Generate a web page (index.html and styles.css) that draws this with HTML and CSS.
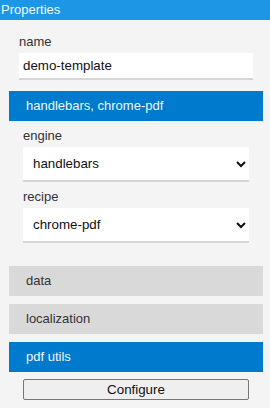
FILE: index.html
```html
<!DOCTYPE html>
<html lang="en">
<head>
  <meta charset="UTF-8" />
  <title>Properties</title>
  <link rel="stylesheet" href="styles.css">
</head>
<body>

  <div class="title">Properties</div>

  <div class="panel">
    <div class="field name-field">
      <label for="name">name</label>
      <input type="text" id="name" value="demo-template" />
    </div>

    <div class="section open">handlebars, chrome-pdf</div>
    <div class="section-body">
      <div class="field">
        <label for="engine">engine</label>
        <select id="engine">
          <option>handlebars</option>
          <option>jsrender</option>
          <option>none</option>
        </select>
      </div>
      <div class="field">
        <label for="recipe">recipe</label>
        <select id="recipe">
          <option>chrome-pdf</option>
          <option>html</option>
          <option>xlsx</option>
        </select>
      </div>
    </div>

    <div class="section">data</div>
    <div class="section">localization</div>
    <div class="section open">pdf utils</div>
    <div class="section-body tools">
      <button id="configureBtn">Configure</button>
    </div>
  </div>

</body>
</html>
```

FILE: styles.css
```css
body {
  margin: 0;
  background: #f4f4f4;
  font-family: 'Liberation Sans', Arial, sans-serif;
  font-size: 13px;
  color: #333;
}
.title {
  height: 20px;
  line-height: 20px;
  padding-left: 1px;
  background: #1e96e6;
  color: #f4f9ff;
}
.panel {
  padding: 0 7px 0 9px;
}
.field {
  display: flex;
  flex-direction: column;
}
.field label {
  line-height: 15px;
  margin-bottom: 4px;
}
.name-field {
  padding: 14px 10px 0;
  margin-bottom: 11px;
}
input, select {
  font-family: 'Liberation Sans', Arial, sans-serif;
  font-size: 13.333px;
  color: #111;
  background: white;
  border: none;
  border-bottom: 2px solid #d6d6d6;
  border-radius: 0;
  outline: none;
  box-sizing: border-box;
  width: 100%;
}
input {
  height: 27px;
  padding: 0 4px;
}
select {
  height: 35px;
  padding: 0 6px;
}
/* expandable sections */
.section {
  height: 30px;
  line-height: 30px;
  padding-left: 17px;
  margin-bottom: 8px;
  background: #d9d9d9;
  color: #333;
}
.section.open {
  background: #007acc;
  color: #f0f6fc;
  margin-bottom: 0;
}
.section-body {
  padding: 7px 14px 0;
  display: flex;
  flex-direction: column;
  gap: 7px;
  margin-bottom: 23px;
}
.section-body.tools {
  padding-top: 7px;
  margin-bottom: 0;
}
button {
  height: 21px;
  font-family: 'Liberation Sans', Arial, sans-serif;
  font-size: 13.333px;
  color: #111;
  background: #efefef;
  border: 1px solid #767676;
  border-radius: 2px;
  padding: 0;
}
```
